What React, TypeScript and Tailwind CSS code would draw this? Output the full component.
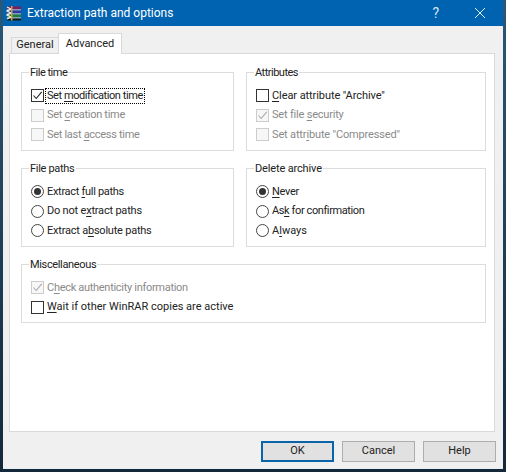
import React from "react";

const FONT = "font-['Roboto','Liberation_Sans','Arial',sans-serif]";

function U({ children }: { children: React.ReactNode }) {
  return <span className="underline underline-offset-[2px] decoration-[1px]">{children}</span>;
}

function Check({ on, off, label, focus, t }: { on?: boolean; off?: boolean; label: React.ReactNode; focus?: boolean; t?: string }) {
  const border = off ? "border-[#cccccc] bg-[#f7f7f7]" : "border-[#333333] bg-white";
  return (
    <div className={`flex items-center h-[19.5px] ${off ? "text-[#8a8a8a]" : "text-[#222222]"}`}>
      <span className={`w-[13px] h-[13px] border flex items-center justify-center shrink-0 ${border}`}>
        {on && (
          <svg width="11" height="11" viewBox="0 0 11 11" fill="none">
            <path d="M1.5 5.5 L4.2 8.5 L9.7 1.8" stroke={off ? "#a8a8a8" : "#222222"} strokeWidth="1.1" />
          </svg>
        )}
      </span>
      <span className={`ml-[2px] px-[1px] leading-[13px] h-[14px] ${t ?? ""} ${focus ? "outline-1 outline-dotted outline-black" : ""}`}>{label}</span>
    </div>
  );
}

function Radio({ on, label, t }: { on?: boolean; label: React.ReactNode; t?: string }) {
  return (
    <div className="flex items-center h-[19.5px] text-[#222222]">
      <span className="w-[13px] h-[13px] rounded-full border border-[#444444] bg-white flex items-center justify-center shrink-0">
        {on && <span className="w-[7px] h-[7px] rounded-full bg-[#333333]" />}
      </span>
      <span className={`ml-[3px] ${t ?? ""}`}>{label}</span>
    </div>
  );
}

function Group({ title, children, className, t }: { title: string; children: React.ReactNode; className?: string; t?: string }) {
  return (
    <fieldset className={`border border-[#dcdcdc] px-[9px] pb-[5px] pt-[6px] ${className ?? ""}`}>
      <legend className={`-ml-[2px] px-[1px] pt-[2px] text-[#222222] leading-[14px] ${t ?? ""}`}>{title}</legend>
      {children}
    </fieldset>
  );
}

function Btn({ children, def }: { children: React.ReactNode; def?: boolean }) {
  return (
    <div className={`w-[73px] h-[21px] flex items-center justify-center bg-[#e1e1e1] text-[#222222] border ${def ? "border-2 border-[#0a64a8]" : "border-[#adadad]"}`}>
      {children}
    </div>
  );
}

function RarIcon() {
  return (
    <svg width="16" height="16" viewBox="0 0 16 16" className="shrink-0">
      <rect x="1" y="1.5" width="14" height="3" fill="#7a1f5c" />
      <rect x="1" y="4.5" width="14" height="1" fill="#e8e8e8" />
      <rect x="1" y="5.5" width="14" height="3" fill="#2f3a9c" />
      <rect x="1" y="8.5" width="14" height="1" fill="#e8e8e8" />
      <rect x="1" y="9.5" width="14" height="3" fill="#1f7a3c" />
      <rect x="1" y="12.5" width="14" height="1" fill="#e8e8e8" />
      <rect x="1" y="13.5" width="14" height="2" fill="#161616" />
      <path d="M1 2 L5 4 L1 6 L5 8 L1 10 L5 12 L1 14" fill="none" stroke="#f4f0e0" strokeWidth="1.2" />
      <rect x="5" y="1" width="1.5" height="14.5" fill="#c9a24a" />
    </svg>
  );
}

export default function App() {
  return (
    <div className={`${FONT} w-[506px] h-[472px] overflow-hidden bg-gradient-to-b from-[#2a5878] to-[#14283a] pl-[3px] pr-[3px] pb-[3px] text-[11px] flex flex-col`}>
      <div className="flex-1 flex flex-col bg-[#f0f0f0] border-b border-[#e2eff4]">
        <header className="h-[26px] bg-[#0063b1] text-white flex items-center pl-[3px] shrink-0">
          <RarIcon />
          <span className="ml-[5px] text-[12px]">Extraction path and options</span>
          <span className="ml-auto text-[14px] mr-[35px] text-[#d8e6f2]">?</span>
          <svg width="12" height="12" viewBox="0 0 12 12" className="mr-[17px]">
            <path d="M1 1 L11 11 M11 1 L1 11" stroke="#e6f0f8" strokeWidth="1" />
          </svg>
        </header>

        <div className="flex items-end h-[27px] pl-[8px] shrink-0">
          <div className="h-[16px] w-[48px] border border-b-0 border-[#d9d9d9] flex items-center justify-center text-[#222222] bg-[#f0f0f0]">General</div>
          <div className="h-[21px] w-[64px] -ml-[1px] border border-b-0 border-[#d9d9d9] flex items-center justify-center text-[#222222] bg-white relative z-10 -mb-[1px]">Advanced</div>
        </div>

        <main className="h-[379px] ml-[6px] mr-[8px] bg-white border border-[#d9d9d9] pl-[11px] pr-[8px] pt-[10px] shrink-0 flex flex-col gap-[9.5px]">
          <div className="flex gap-[12px]">
            <Group title="File time" className="w-[213px]" t="tracking-[-0.5px]">
              <Check on focus t="tracking-[-0.43px]" label={<>Set <U>m</U>odification time</>} />
              <Check off t="tracking-[-0.3px]" label={<>Set <U>c</U>reation time</>} />
              <Check off t="tracking-[-0.3px]" label={<>Set last <U>a</U>ccess time</>} />
            </Group>
            <Group title="Attributes" className="w-[240px]" t="tracking-[-0.5px]">
              <Check t="tracking-[-0.08px]" label={<><U>C</U>lear attribute "Archive"</>} />
              <Check on off t="tracking-[-0.2px]" label={<>Set file <U>s</U>ecurity</>} />
              <Check off t="tracking-[-0.15px]" label={<>Set attr<U>i</U>bute "Compressed"</>} />
            </Group>
          </div>
          <div className="flex gap-[12px]">
            <Group title="File paths" className="w-[213px]" t="tracking-[-0.3px]">
              <Radio on t="tracking-[-0.3px]" label={<>Extract <U>f</U>ull paths</>} />
              <Radio t="tracking-[-0.2px]" label={<>Do not e<U>x</U>tract paths</>} />
              <Radio t="tracking-[-0.22px]" label={<>Extract a<U>b</U>solute paths</>} />
            </Group>
            <Group title="Delete archive" className="w-[240px]" t="tracking-[-0.15px]">
              <Radio on t="tracking-[-0.3px]" label={<><U>N</U>ever</>} />
              <Radio t="tracking-[-0.4px]" label={<>As<U>k</U> for confirmation</>} />
              <Radio label={<>A<U>l</U>ways</>} />
            </Group>
          </div>
          <Group title="Miscellaneous" className="w-[465px]" t="tracking-[-0.35px]">
            <Check on off t="tracking-[-0.3px]" label={<>C<U>h</U>eck authenticity information</>} />
            <Check label={<><U>W</U>ait if other WinRAR copies are active</>} />
          </Group>
        </main>

        <footer className="flex justify-end gap-[8px] pt-[9px] pr-[7px]">
          <Btn def>OK</Btn>
          <Btn>Cancel</Btn>
          <Btn>Help</Btn>
        </footer>
      </div>
    </div>
  );
}
